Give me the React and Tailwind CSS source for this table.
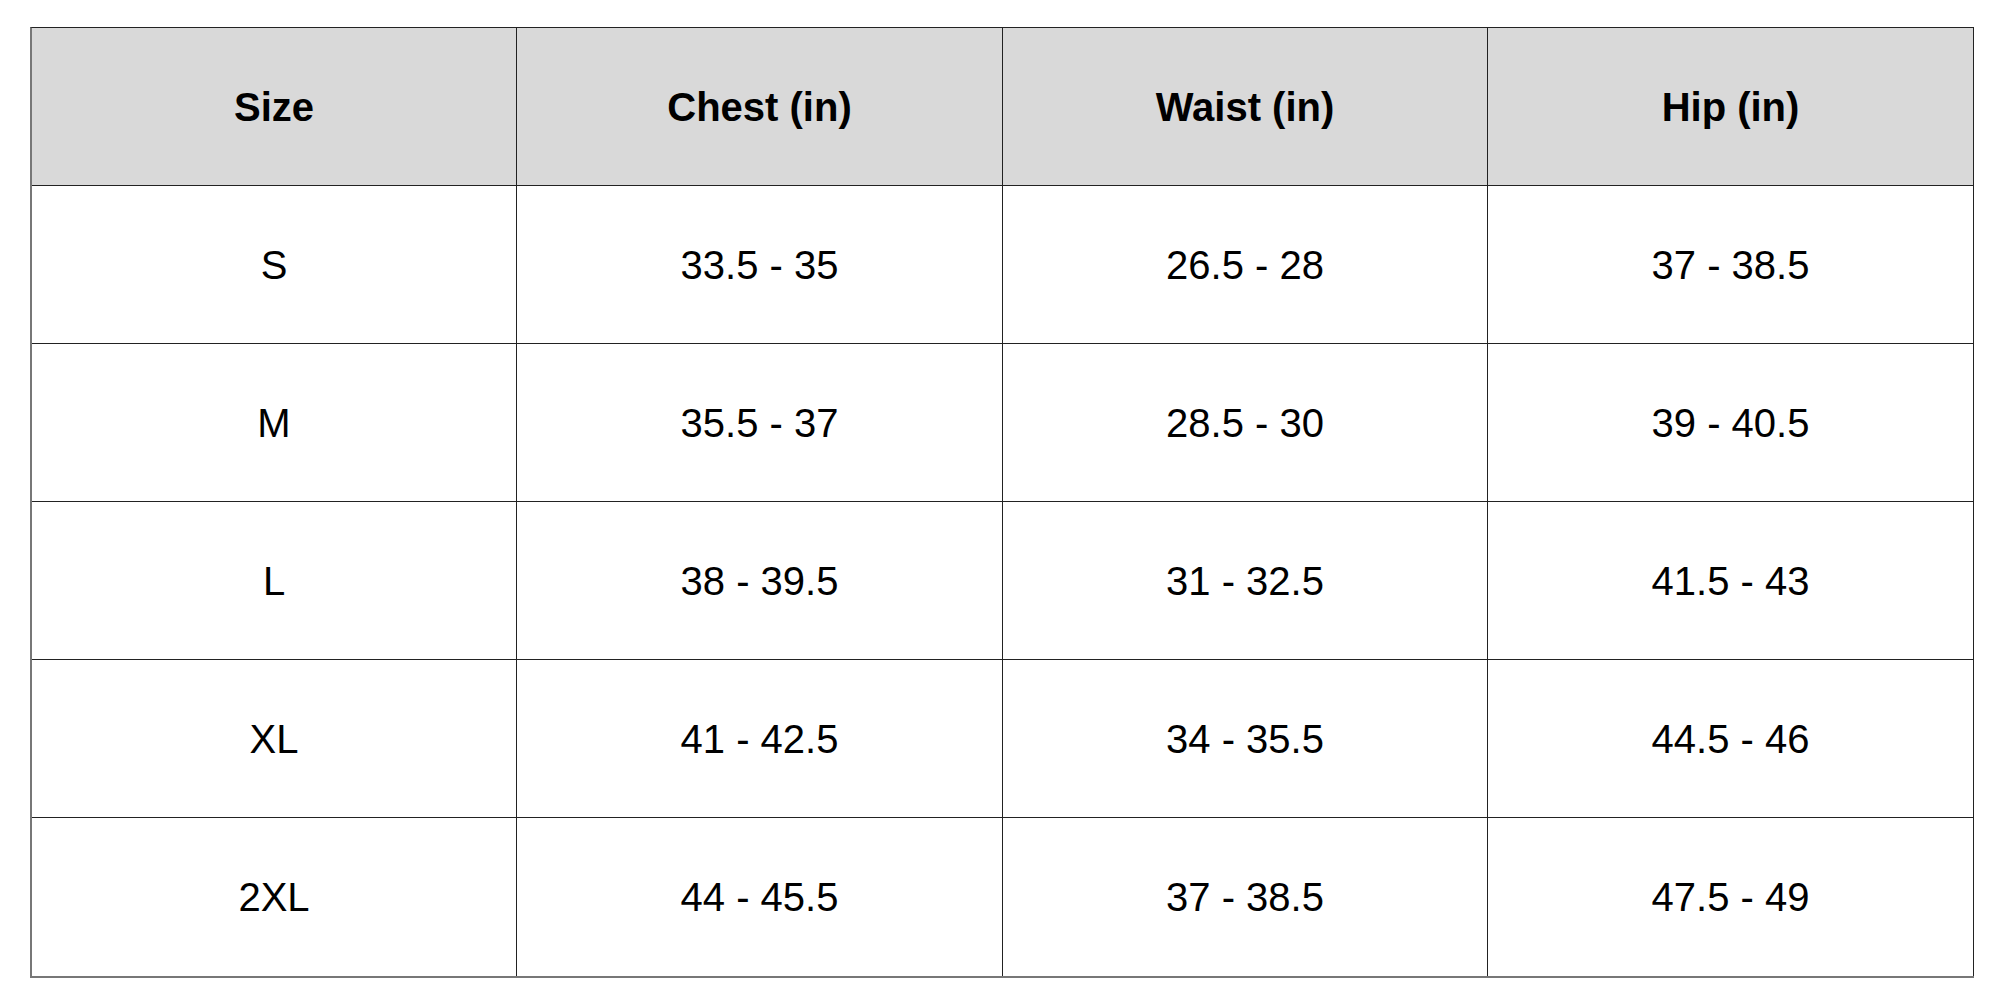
import React from 'react';

// Size chart rows: [size, chest, waist, hip]
const HEADERS = ['Size', 'Chest (in)', 'Waist (in)', 'Hip (in)'];

const ROWS = [
  ['S', '33.5 - 35', '26.5 - 28', '37 - 38.5'],
  ['M', '35.5 - 37', '28.5 - 30', '39 - 40.5'],
  ['L', '38 - 39.5', '31 - 32.5', '41.5 - 43'],
  ['XL', '41 - 42.5', '34 - 35.5', '44.5 - 46'],
  ['2XL', '44 - 45.5', '37 - 38.5', '47.5 - 49'],
];

export default function App() {
  return (
    <div className="w-[2000px] h-[1000px] bg-white pt-[27px] pl-[30px] font-['Liberation_Sans',Arial,sans-serif] text-black">
      <div className="inline-grid grid-cols-[485px_486px_485px_486px] border-t border-t-[#222] border-l-2 border-l-[#777] border-b-2 border-b-[#777]">
        {HEADERS.map((h) => (
          <div
            key={h}
            className="h-[158px] flex items-center justify-center bg-[#d9d9d9] border-r border-b border-[#222] text-[40px] font-bold"
          >
            {h}
          </div>
        ))}
        {ROWS.map((row, ri) =>
          row.map((cell, ci) => (
            <div
              key={`${ri}-${ci}`}
              className={`h-[158px] flex items-center justify-center border-r border-[#222] text-[40px] ${
                ri < ROWS.length - 1 ? 'border-b' : ''
              }`}
            >
              {cell}
            </div>
          ))
        )}
      </div>
    </div>
  );
}
